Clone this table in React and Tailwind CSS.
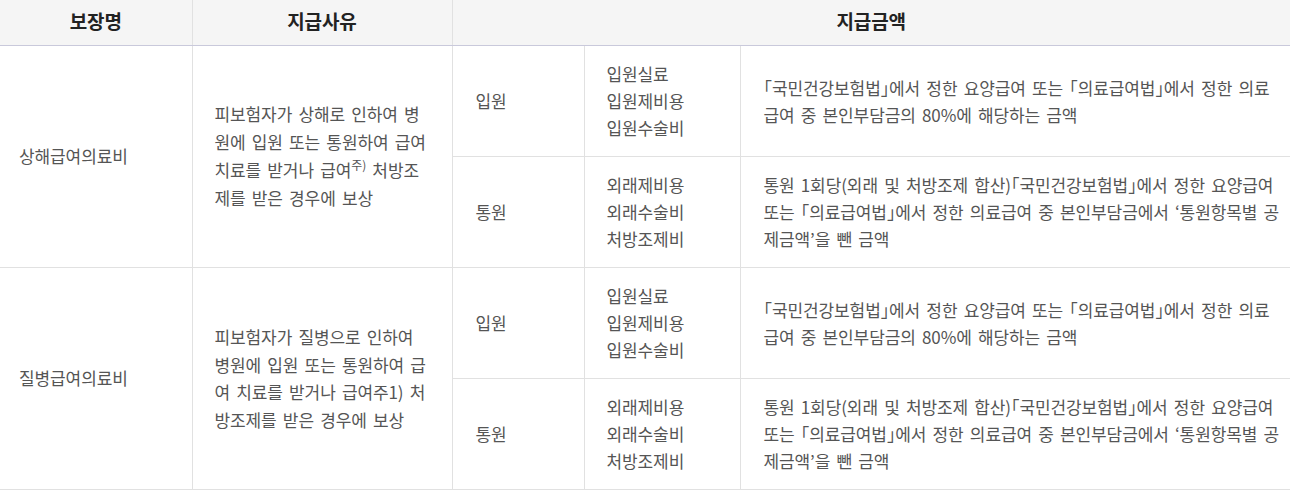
import React from "react";

const font = { fontFamily: '"Noto Sans CJK KR", "Noto Sans", sans-serif' };

function Lines({ lines }) {
  return (
    <>
      {lines.map((l, i) => (
        <div key={i} className="whitespace-nowrap">
          {l}
        </div>
      ))}
    </>
  );
}

const inpatientItems = ["입원실료", "입원제비용", "입원수술비"];
const outpatientItems = ["외래제비용", "외래수술비", "처방조제비"];
const inpatientDesc = [
  "｢국민건강보험법｣에서 정한 요양급여 또는 ｢의료급여법｣에서 정한 의료",
  "급여 중 본인부담금의 80%에 해당하는 금액",
];
const outpatientDesc = [
  "통원 1회당(외래 및 처방조제 합산)｢국민건강보험법｣에서 정한 요양급여",
  "또는 ｢의료급여법｣에서 정한 의료급여 중 본인부담금에서 ‘통원항목별 공",
  "제금액’을 뺀 금액",
];

function Group({ name, reason }) {
  const td = "border-b border-[#e1e1e1] align-middle text-left";
  return (
    <>
      <tr className="h-[111px]">
        <td rowSpan={2} className={`${td} border-r pl-[19px]`}>
          {name}
        </td>
        <td rowSpan={2} className={`${td} border-r pl-[22px]`}>
          {reason}
        </td>
        <td className={`${td} border-r pl-[23px]`}>입원</td>
        <td className={`${td} border-r pl-[22px] leading-[27px]`}>
          <Lines lines={inpatientItems} />
        </td>
        <td className={`${td} pl-[23px] leading-[27px]`}>
          <Lines lines={inpatientDesc} />
        </td>
      </tr>
      <tr className="h-[111px]">
        <td className={`${td} border-r pl-[23px]`}>통원</td>
        <td className={`${td} border-r pl-[22px] leading-[27px]`}>
          <Lines lines={outpatientItems} />
        </td>
        <td className={`${td} pl-[23px] leading-[27px]`}>
          <Lines lines={outpatientDesc} />
        </td>
      </tr>
    </>
  );
}

export default function App() {
  const th =
    "h-[45px] border-b border-b-[#c9c9db] bg-[#f5f5f5] text-[19px] font-bold text-[#222] text-center align-middle pb-[2px] [word-spacing:0px]";
  return (
    <div className="w-[1290px] bg-white" style={font}>
      <table className="w-[1290px] table-fixed border-collapse text-[17px] tracking-[-0.1px] [word-spacing:2.5px] text-[#555]">
        <colgroup>
          <col className="w-[192px]" />
          <col className="w-[260px]" />
          <col className="w-[132px]" />
          <col className="w-[156px]" />
          <col className="w-[550px]" />
        </colgroup>
        <thead>
          <tr>
            <th className={`${th} border-r border-r-[#e1e1e1]`}>보장명</th>
            <th className={`${th} border-r border-r-[#e1e1e1]`}>지급사유</th>
            <th colSpan={3} className={th}>
              지급금액
            </th>
          </tr>
        </thead>
        <tbody>
          <Group
            name="상해급여의료비"
            reason={
              <div className="leading-[28px]">
                <div className="whitespace-nowrap">피보험자가 상해로 인하여 병</div>
                <div className="whitespace-nowrap">원에 입원 또는 통원하여 급여</div>
                <div className="whitespace-nowrap">
                  치료를 받거나 급여
                  <span className="align-super text-[12px] leading-none">주)</span> 처방조
                </div>
                <div className="whitespace-nowrap">제를 받은 경우에 보상</div>
              </div>
            }
          />
          <Group
            name="질병급여의료비"
            reason={
              <div className="leading-[27.5px]">
                <div className="whitespace-nowrap">피보험자가 질병으로 인하여</div>
                <div className="whitespace-nowrap">병원에 입원 또는 통원하여 급</div>
                <div className="whitespace-nowrap">여 치료를 받거나 급여주1) 처</div>
                <div className="whitespace-nowrap">방조제를 받은 경우에 보상</div>
              </div>
            }
          />
        </tbody>
      </table>
    </div>
  );
}
